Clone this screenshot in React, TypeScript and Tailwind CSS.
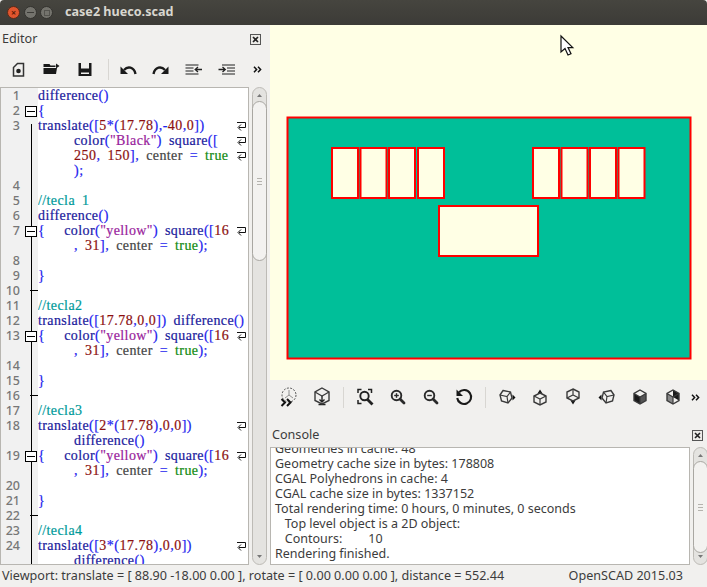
import React from 'react';

const K = 'text-[#1a1a9c] tracking-[0.4px]'; // identifiers
const B = 'text-[#2222ee] tracking-[0.5px]'; // brackets
const N = 'text-[#8c1010] tracking-[0.5px]'; // numbers
const S = 'text-[#99229c] tracking-[0.4px]'; // strings
const C = 'text-[#009a9a] tracking-[0.4px]'; // comments
const T = 'text-[#108a10] tracking-[0.4px]'; // true
const G = 'text-[#444444] tracking-[0.4px]'; // plain
const TAB = 'inline-block w-[19px]';

type Seg = [string, string];
type Row = { no?: number; fold?: boolean; wrap?: boolean; line?: 'end'; indent?: number; segs: Seg[] };

const brace16: Seg[] = [
  [B, '{'], [TAB, ''], [K, 'color'], [B, '('], [S, '"yellow"'], [B, ')'], [G, ' '], [K, 'square'], [B, '(['], [N, '16'],
];
const rest31: Seg[] = [[B, ', '], [N, '31'], [B, '], '], [G, 'center '], [B, '= '], [T, 'true'], [B, ');']];

const rows: Row[] = [
  { no: 1, segs: [[K, 'difference'], [B, '()']] },
  { no: 2, fold: true, segs: [[B, '{']] },
  { no: 3, wrap: true, segs: [[K, 'translate'], [B, '(['], [N, '5'], [B, '*('], [N, '17.78'], [B, '),-'], [N, '40'], [B, ','], [N, '0'], [B, '])']] },
  { wrap: true, indent: 36, segs: [[K, 'color'], [B, '('], [S, '"Black"'], [B, ')'], [G, ' '], [K, 'square'], [B, '([']] },
  { wrap: true, indent: 36, segs: [[N, '250'], [B, ', '], [N, '150'], [B, '], '], [G, 'center '], [B, '= '], [T, 'true']] },
  { indent: 36, segs: [[B, ');']] },
  { no: 4, segs: [] },
  { no: 5, segs: [[C, '//tecla 1']] },
  { no: 6, segs: [[K, 'difference'], [B, '()']] },
  { no: 7, fold: true, wrap: true, segs: brace16 },
  { indent: 36, segs: rest31 },
  { no: 8, segs: [] },
  { no: 9, segs: [[B, '}']] },
  { no: 10, line: 'end', segs: [] },
  { no: 11, segs: [[C, '//tecla2']] },
  { no: 12, segs: [[K, 'translate'], [B, '(['], [N, '17.78'], [B, ','], [N, '0'], [B, ','], [N, '0'], [B, '])'], [G, ' '], [K, 'difference'], [B, '()']] },
  { no: 13, fold: true, wrap: true, segs: brace16 },
  { indent: 36, segs: rest31 },
  { no: 14, segs: [] },
  { no: 15, segs: [[B, '}']] },
  { no: 16, line: 'end', segs: [] },
  { no: 17, segs: [[C, '//tecla3']] },
  { no: 18, wrap: true, segs: [[K, 'translate'], [B, '(['], [N, '2'], [B, '*('], [N, '17.78'], [B, '),'], [N, '0'], [B, ','], [N, '0'], [B, '])']] },
  { indent: 36, segs: [[K, 'difference'], [B, '()']] },
  { no: 19, fold: true, wrap: true, segs: brace16 },
  { indent: 36, segs: rest31 },
  { no: 20, segs: [] },
  { no: 21, segs: [[B, '}']] },
  { no: 22, line: 'end', segs: [] },
  { no: 23, segs: [[C, '//tecla4']] },
  { no: 24, wrap: true, segs: [[K, 'translate'], [B, '(['], [N, '3'], [B, '*('], [N, '17.78'], [B, '),'], [N, '0'], [B, ','], [N, '0'], [B, '])']] },
  { indent: 36, segs: [[K, 'difference'], [B, '()']] },
];

const Ico = ({ children }: { children: React.ReactNode }) => (
  <svg width={20} height={20} viewBox="0 0 20 20" className="shrink-0">{children}</svg>
);

const WrapMark = () => (
  <svg width="11" height="11" viewBox="0 0 11 11" className="shrink-0">
    <path d="M1 1.5h8.5v5H3" fill="none" stroke="#111" strokeWidth="1" />
    <path d="M5 3.5 2 6.5l3 3" fill="none" stroke="#111" strokeWidth="1" />
  </svg>
);

const CloseBox = () => (
  <svg width="11" height="11" viewBox="0 0 11 11" className="shrink-0">
    <rect x="0.5" y="0.5" width="10" height="10" fill="#ecebe8" stroke="#555" />
    <path d="M3 3l5 5M8 3l-5 5" stroke="#222" strokeWidth="1.6" />
  </svg>
);

const More = () => (
  <svg width="9" height="7" viewBox="0 0 9 7" className="shrink-0">
    <path d="M1 .8 3.6 3.5 1 6.2M5 .8 7.6 3.5 5 6.2" fill="none" stroke="#111" strokeWidth="1.5" />
  </svg>
);

const Sep = () => <div className="w-px h-[21px] bg-[#d8d6d2] shrink-0" />;

const Cube = ({ hex, inner, children }: { hex?: string; inner?: string; children?: React.ReactNode }) => (
  <Ico>
    {children}
    <path d={hex ?? 'M10 3 16 6.5v7L10 17 4 13.5v-7Z'} fill="none" stroke="#3a3a3a" strokeWidth="1.4" />
    <path d={inner ?? 'M4 6.5 10 10l6-3.5M10 10v7'} fill="none" stroke="#3a3a3a" strokeWidth="1.2" />
  </Ico>
);

const Zoom = ({ plus }: { plus?: boolean }) => (
  <Ico>
    <circle cx="8.5" cy="8.5" r="4.8" fill="none" stroke="#2a2a2a" strokeWidth="1.9" />
    <path d="M12 12l4 4" stroke="#2a2a2a" strokeWidth="2.8" strokeLinecap="round" />
    <path d="M6.2 8.5h4.6" stroke="#2a2a2a" strokeWidth="1.4" />
    {plus && <path d="M8.5 6.2v4.6" stroke="#2a2a2a" strokeWidth="1.4" />}
  </Ico>
);

const ScrollBar = ({ thumbTop, thumbH, h }: { thumbTop: number; thumbH: number; h: number }) => (
  <div className="w-[15px] shrink-0 relative rounded-full border border-[#bdbbb6] bg-[#e4e3e0]" style={{ height: h }}>
    <svg width="13" height="10" viewBox="0 0 13 10" className="absolute top-[2px] left-0">
      <path d="M4 7l2.5-3L9 7Z" fill="#777" />
    </svg>
    <svg width="13" height="10" viewBox="0 0 13 10" className="absolute bottom-[2px] left-0">
      <path d="M4 3l2.5 3L9 3Z" fill="#777" />
    </svg>
    <div
      className="absolute left-[-1px] w-[15px] rounded-full border border-[#a9a7a2] bg-[#f3f2f0] flex items-center justify-center"
      style={{ top: thumbTop, height: thumbH }}
    >
      <div className="w-[5px] h-[7px] border-y border-[#b5b3ae] flex items-center"><div className="w-full h-px bg-[#b5b3ae]" /></div>
    </div>
  </div>
);

const EditorRow = ({ r }: { r: Row }) => (
  <div className="h-[15px] flex relative">
    <div className="w-[20px] shrink-0 bg-[#f1f1f1] text-right text-[12.5px] leading-[15px] text-[#777] font-['Noto_Sans',sans-serif] font-medium pr-[1px]">{r.no ?? ''}</div>
    <div className="w-[17px] shrink-0 bg-[#f1f1f1] relative">
      {r.fold && (
        <div className="absolute left-[4px] top-[3px] w-[12px] h-[11px] border border-black bg-white z-10 flex items-center justify-center">
          <div className="w-[8px] h-px bg-black" />
        </div>
      )}
      {r.line === 'end' && <div className="absolute left-[9px] top-[7px] w-[8px] h-px bg-black" />}
    </div>
    <div
      className="flex-1 whitespace-pre leading-[15px] text-[14px] [word-spacing:3px] [-webkit-text-stroke:0.2px]"
      style={{ paddingLeft: r.indent ?? 0 }}
    >
      {r.segs.map((s, i) => <span key={i} className={s[0]}>{s[1]}</span>)}
    </div>
    {r.wrap && <div className="absolute left-[235px] top-[3px]"><WrapMark /></div>}
  </div>
);

export default function App() {
  return (
    <div className="w-[707px] h-[587px] overflow-hidden flex flex-col bg-[#f1f0ee] text-[#3c3c3c] font-['Noto_Sans',sans-serif]">
      {/* title bar */}
      <div className="h-[25px] shrink-0 flex items-center rounded-t-[4px] bg-gradient-to-b from-[#46453f] to-[#3c3b37] pl-[7px]">
        <div className="w-[13px] h-[13px] rounded-full bg-[#e0552e] border border-[#5a2a18] flex items-center justify-center text-[9px] leading-none text-[#5a1c08] font-bold">×</div>
        <div className="w-[13px] h-[13px] rounded-full bg-[#74736d] border border-[#33322e] ml-[3.5px] flex items-center justify-center"><div className="w-[7px] h-[1.5px] bg-[#3c3b37]" /></div>
        <div className="w-[13px] h-[13px] rounded-full bg-[#74736d] border border-[#33322e] ml-[3.5px] flex items-center justify-center"><div className="w-[6px] h-[6px] border border-[#55544f]" /></div>
        <div className="ml-[12px] text-[12.6px] font-bold text-[#d8d6cf]">case2 hueco.scad</div>
      </div>

      <div className="flex-1 min-h-0 flex">
        {/* editor dock */}
        <div className="w-[270px] shrink-0 flex flex-col">
          <div className="h-[27px] shrink-0 flex items-center justify-between pl-[2px] pr-[9px] text-[12.6px] pt-[1px]">
            <span>Editor</span>
            <CloseBox />
          </div>
          <div className="h-[35px] shrink-0 flex items-center pl-[9px]">
            <div className="flex items-center gap-[13px]">
              <Ico>
                <path d="M8.5 3.5h6v12.5h-10V7.5Z" fill="none" stroke="#333" strokeWidth="1.5" />
                <circle cx="9.5" cy="11" r="2.3" fill="#222" />
              </Ico>
              <Ico>
                <path d="M1.5 4h6l1 1.5h5V7H1.5Z" fill="#1a1a1a" />
                <path d="M1.5 8H15l-1 6H1.5Z" fill="#1a1a1a" />
                <path d="M14 3.5 17.5 6 14 8.5Z" fill="#1a1a1a" />
              </Ico>
              <Ico>
                <path d="M3.5 3h13v13h-13Z" fill="#1a1a1a" />
                <path d="M6 3h8v5.5H6Z" fill="#f1f0ee" />
                <path d="M6 12.5h8v1.5H6Z" fill="#f1f0ee" />
              </Ico>
            </div>
            <div className="ml-[13px]"><Sep /></div>
            <div className="flex items-center gap-[13px] ml-[9px]">
              <Ico>
                <path d="M6 10C9.5 6 16 6.5 17.5 14" fill="none" stroke="#1a1a1a" strokeWidth="2.4" />
                <path d="M2.5 6.5V14H10Z" fill="#1a1a1a" />
              </Ico>
              <Ico>
                <path d="M14 10C10.5 6 4 6.5 2.5 14" fill="none" stroke="#1a1a1a" strokeWidth="2.4" />
                <path d="M17.5 6.5V14H10Z" fill="#1a1a1a" />
              </Ico>
              <Ico>
                <path d="M1.5 5h13M1.5 8h8M1.5 11h8M1.5 14h13" stroke="#666" strokeWidth="1.3" />
                <path d="M11 9.5h7M14 7l-2.8 2.5L14 12" fill="none" stroke="#222" strokeWidth="1.3" />
              </Ico>
              <Ico>
                <path d="M5 5h13M10 8h8M10 11h8M5 14h13" stroke="#666" strokeWidth="1.3" />
                <path d="M1.5 9.5h7M5.5 7l2.8 2.5L5.5 12" fill="none" stroke="#222" strokeWidth="1.3" />
              </Ico>
            </div>
            <div className="ml-[16px]"><More /></div>
          </div>
          <div className="flex items-start">
            <div className="w-[249px] h-[478px] overflow-hidden border border-[#b8b6b1] bg-white font-['Liberation_Serif',serif] relative">
              {/* fold line */}
              <div className="absolute left-[30px] top-[36px] bottom-0 w-[1px] bg-black z-[1]" />
              {rows.map((r, i) => <EditorRow key={i} r={r} />)}
            </div>
            <div className="ml-[3px]"><ScrollBar h={478} thumbTop={13} thumbH={160} /></div>
          </div>
        </div>

        {/* right side */}
        <div className="flex-1 min-w-0 flex flex-col">
          <svg width="437" height="355" viewBox="270 25 437 355" className="block shrink-0 bg-[#ffffe5]">
            <rect x="287.5" y="117.5" width="403" height="241" fill="#00bf99" stroke="#ff0000" strokeWidth="2" />
            {[332, 360.5, 389, 418, 533, 561.5, 590, 618.5, 439].map((x, i) => (
              <rect
                key={x}
                x={x}
                y={i === 8 ? 206 : 148}
                width={i === 8 ? 99 : 26}
                height={50}
                fill="#ffffe5"
                stroke="#ff0000"
                strokeWidth="2"
              />
            ))}
            <path d="M561 36v16l4-3.5 3 6.5 3-1.2-3-6.2h4.8Z" fill="#fff" stroke="#111" strokeWidth="1.2" />
          </svg>
          <div className="h-[34px] shrink-0 flex items-center pl-[9px]">
            <div className="flex items-center gap-[13px]">
              <Ico>
                <circle cx="10" cy="8" r="7" fill="none" stroke="#555" strokeWidth="1" strokeDasharray="2 1.4" />
                <path d="M10 3v5l-4 3M10 8l4 3" fill="none" stroke="#777" strokeWidth="0.8" />
                <path d="M2.5 12 6 15.5 2.5 19M8 12l3.5 3.5L8 19" fill="none" stroke="#111" strokeWidth="2" />
              </Ico>
              <Cube hex="M10 1 17 5v8.5L10 17 3 13.5V5Z" inner="M3 5 10 9l7-4">
                <path d="M10 9v6M7.5 12.5l2.5 2.5 2.5-2.5M6.5 17.5h7" fill="none" stroke="#222" strokeWidth="1.4" />
              </Cube>
            </div>
            <div className="ml-[11px]"><Sep /></div>
            <div className="flex items-center gap-[13px] ml-[11px]">
              <Ico>
                <path d="M3 6V2.5h3.5M13 2.5h3.5V6M3 13v3.5h3.5" fill="none" stroke="#222" strokeWidth="1.5" />
                <circle cx="9.5" cy="9" r="4.2" fill="none" stroke="#222" strokeWidth="1.9" />
                <path d="M12.5 12.5l5 5" stroke="#222" strokeWidth="2.8" />
              </Ico>
              <Zoom plus />
              <Zoom />
              <Ico>
                <path d="M5 5.2A7 7 0 1 1 3.2 11" fill="none" stroke="#1a1a1a" strokeWidth="2.1" />
                <path d="M2.5 2.5v6.5H9Z" fill="#1a1a1a" />
              </Ico>
            </div>
            <div className="ml-[11px]"><Sep /></div>
            <div className="flex items-center gap-[13px] ml-[11px]">
              <Cube hex="M6 3.5 13.5 5 15 11 11 16 4.5 14 3 8Z" inner="M3 8 10 9.5 13.5 5M10 9.5 11 16">
                <path d="M15.5 7.5 18.5 10.5 15.5 13.5Z" fill="#111" />
              </Cube>
              <Cube hex="M10 6 16 9v6l-6 3-6-3V9Z" inner="M4 9l6 3 6-3M10 12v6">
                <path d="M7.5 6.5 10 2.5l2.5 4Z" fill="#111" />
              </Cube>
              <Cube hex="M10 2 16 5v6l-6 3-6-3V5Z" inner="M10 2v6M4 11l6-3 6 3">
                <path d="M7.5 13.5 10 17.5l2.5-4Z" fill="#111" />
              </Cube>
              <div className="ml-[1px]">
                <Cube hex="M14 3.5 6.5 5 5 11 9 16 15.5 14 17 8Z" inner="M17 8 10 9.5 6.5 5M10 9.5 9 16">
                  <path d="M4.5 7.5 1.5 10.5 4.5 13.5Z" fill="#111" />
                </Cube>
              </div>
              <Cube>
                <path d="M4 6.5 10 10v7L4 13.5Z" fill="#1a1a1a" />
                <path d="M10 10l6-3.5v7L10 17Z" fill="#555" />
              </Cube>
              <Cube>
                <path d="M10 3 16 6.5v7L10 10Z" fill="#1a1a1a" />
                <path d="M4 6.5 10 10v7L4 13.5Z" fill="#888" />
              </Cube>
            </div>
            <div className="ml-[8px]"><More /></div>
          </div>
          <div className="h-[33px] shrink-0 flex items-center justify-between pl-[2px] pr-[4px] pt-[10px] text-[12.6px]">
            <span>Console</span>
            <CloseBox />
          </div>
          <div className="flex items-start">
            <div className="w-[420px] h-[118px] shrink-0 border border-[#b8b6b1] bg-white overflow-hidden text-[12.5px] leading-[15px] pl-[4px] text-[#3c3c3c] whitespace-pre">
              <div className="mt-[-7px]">Geometries in cache: 48</div>
              <div>Geometry cache size in bytes: 178808</div>
              <div>CGAL Polyhedrons in cache: 4</div>
              <div>CGAL cache size in bytes: 1337152</div>
              <div>Total rendering time: 0 hours, 0 minutes, 0 seconds</div>
              <div>   Top level object is a 2D object:</div>
              <div>   Contours:        10</div>
              <div>Rendering finished.</div>
            </div>
            <div className="ml-[3px]"><ScrollBar h={118} thumbTop={13} thumbH={92} /></div>
          </div>
        </div>
      </div>

      {/* status bar */}
      <div className="h-[21px] shrink-0 flex items-center justify-between pl-[2px] pr-[24px] text-[12.6px] text-[#3c3c3c]">
        <span>Viewport: translate = [ 88.90 -18.00 0.00 ], rotate = [ 0.00 0.00 0.00 ], distance = 552.44</span>
        <span>OpenSCAD 2015.03</span>
      </div>
    </div>
  );
}
